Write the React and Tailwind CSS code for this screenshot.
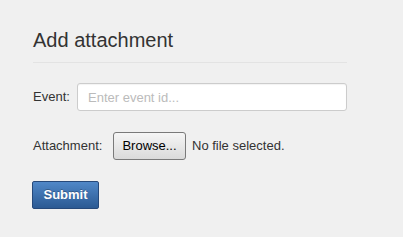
export default function App() {
    return (
        <div className="min-h-screen w-full bg-[#f0f0f0] font-['Liberation_Sans',Arial,sans-serif] text-[#333]">
            <div className="w-[314px] ml-[33px] pt-[30px]">
                {/* Title */}
                <div className="border-b border-[#e3e3e3] pb-[12px]">
                    <h2 className="text-[20px] leading-[20px] text-[#333]">Add attachment</h2>
                </div>

                {/* Event row */}
                <div className="flex items-center mt-[20px]">
                    <label className="w-[44px] text-[13px] leading-[16px]">Event:</label>
                    <input
                        type="text"
                        placeholder="Enter event id..."
                        className="w-[270px] h-[28px] bg-white border border-[#cccccc] rounded-[3px] px-[10px] text-[13px] placeholder:text-[#bbbbbb] shadow-[inset_0_1px_1px_rgba(0,0,0,0.05)] outline-none"
                    />
                </div>

                {/* Attachment row */}
                <div className="flex items-center mt-[21px]">
                    <label className="w-[80px] text-[13px] leading-[16px] whitespace-nowrap">Attachment:</label>
                    <button className="w-[73px] h-[28px] border border-[#7a7a7a] rounded-[3px] bg-gradient-to-b from-[#f6f6f6] to-[#dadada] text-[13px] text-black">
                        Browse...
                    </button>
                    <span className="ml-[6px] text-[13px] leading-[16px]">No file selected.</span>
                </div>

                {/* Submit */}
                <button className="mt-[21px] -ml-[1px] w-[67px] h-[28px] rounded-[2px] border border-[#26497a] bg-gradient-to-b from-[#5088c8] to-[#2c5a93] text-white text-[13px] font-bold [text-shadow:0_-1px_0_rgba(0,0,0,0.25)]">
                    Submit
                </button>
            </div>
        </div>
    );
}
